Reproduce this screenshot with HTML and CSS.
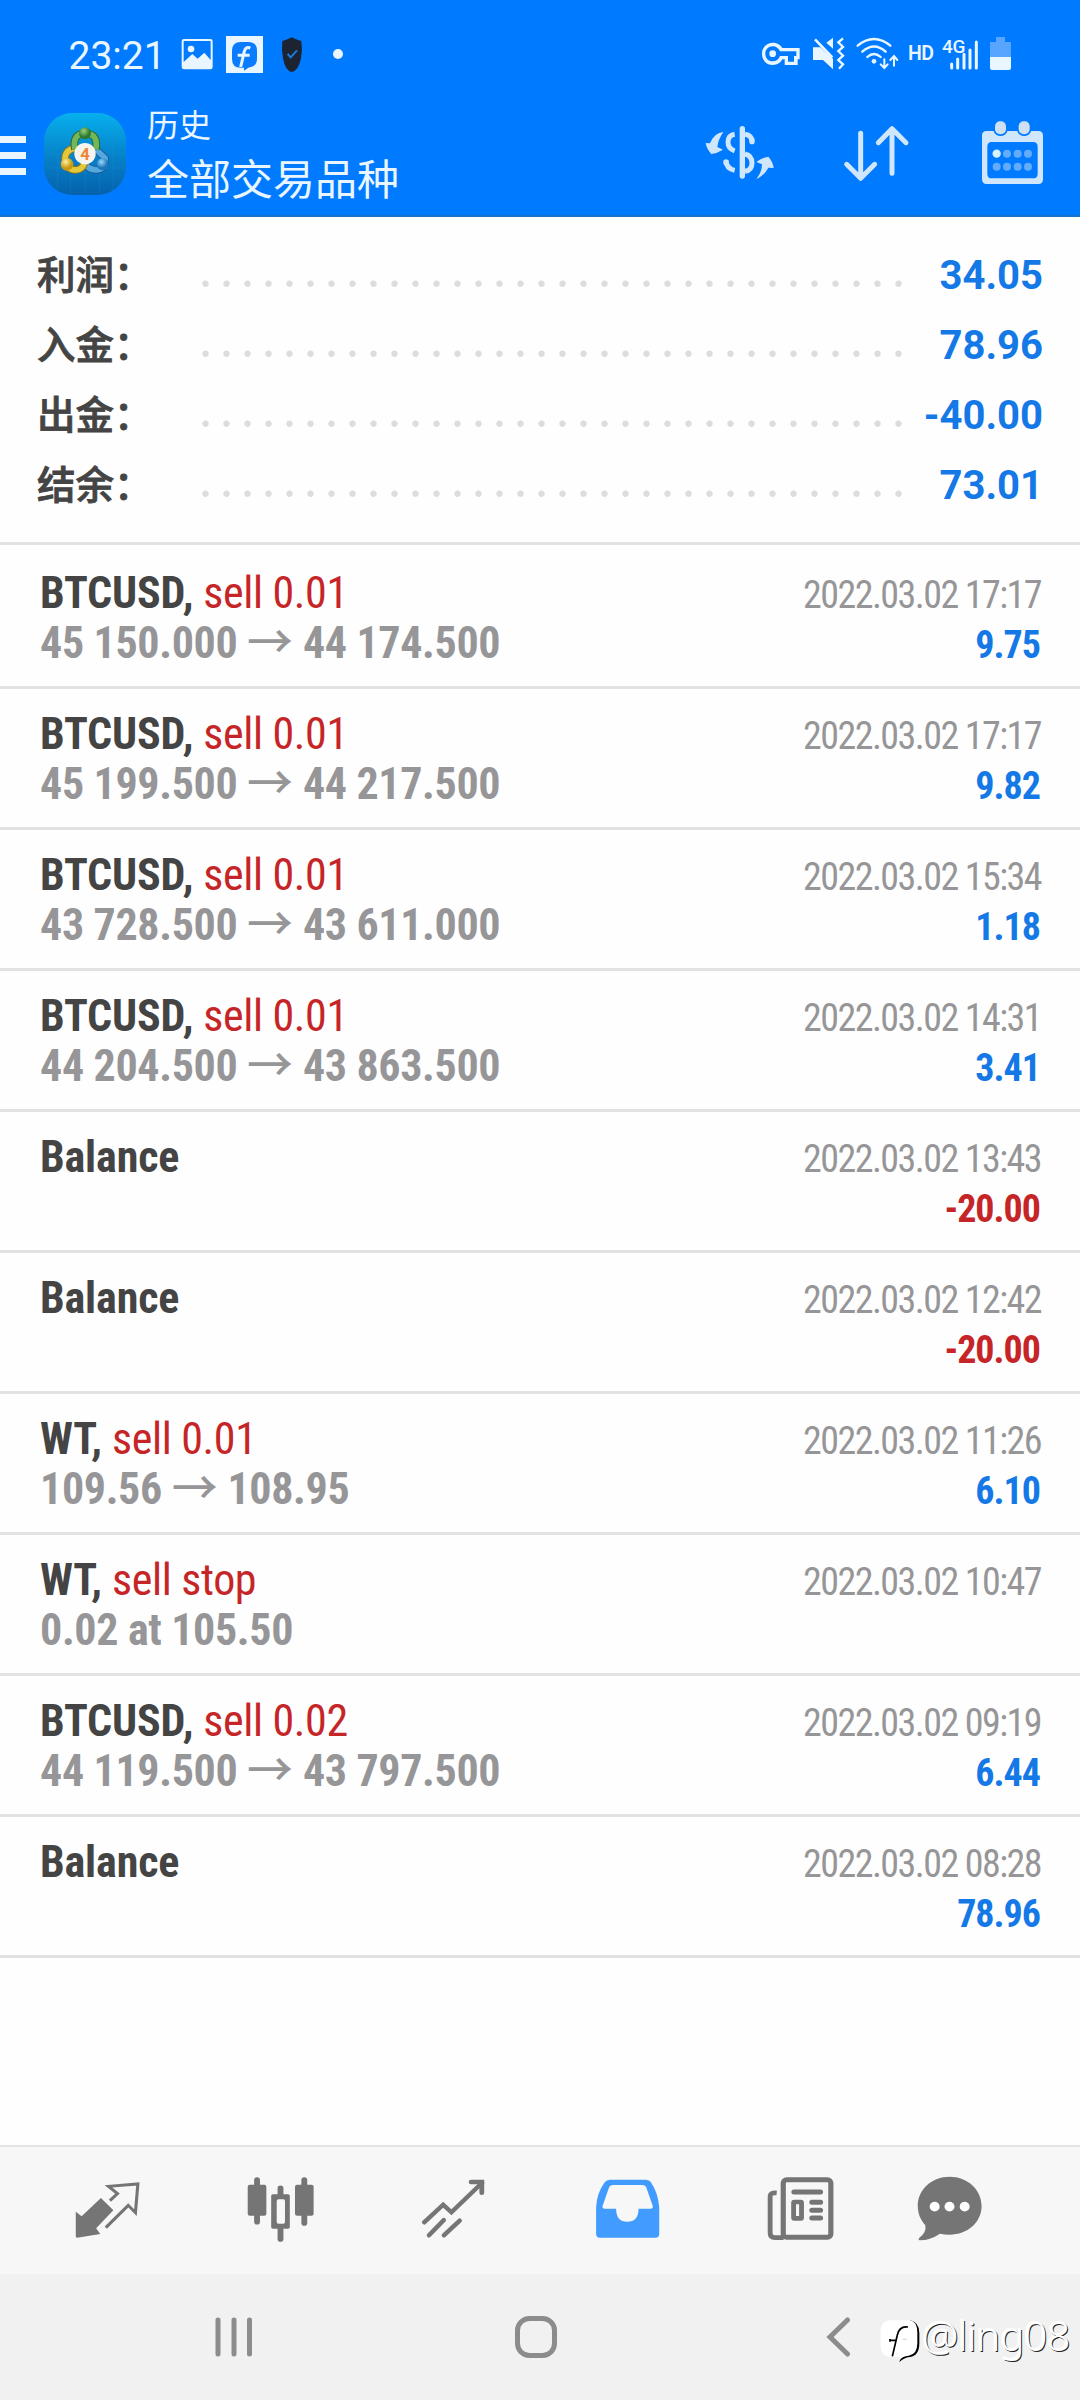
FILE: index.html
```html
<!DOCTYPE html>
<html lang="zh-CN">
<head>
<meta charset="utf-8">
<title>历史</title>
<link rel="stylesheet" href="styles.css">
</head>
<body>
<div class="screen">
  <header class="top">
    <div class="status">
      <span class="clock">23:21</span>
      <svg class="st-photo" width="32" height="40" viewBox="544 102 96 120">
        <path fill="#e9f6ff" fill-rule="evenodd" d="M553 117H632Q639 117 639 124V201Q639 208 632 208H553Q546 208 546 201V124Q546 117 553 117ZM552 123V186L578 162L594 176L614 158L633 180V123Z"/>
        <circle cx="574" cy="147" r="10" fill="#e9f6ff"/>
      </svg>
      <svg class="st-f" width="37" height="40" viewBox="678 102 111 120">
        <rect x="678" y="108" width="111" height="111" fill="#e9f6ff"/>
        <path fill="#0a7cff" d="M722 126H748Q771 128 771 152V176Q771 200 745 203L732 212V203H722Q696 203 696 176V152Q696 126 722 126Z"/>
        <path fill="none" stroke="#e9f6ff" stroke-width="9" d="M751 144Q737 138 733 154L722 201M713 166H749"/>
      </svg>
      <svg class="st-shield" width="22" height="40" viewBox="842 102 66 120">
        <path fill="#1b2430" d="M874 112Q882 117 903 123Q907 150 902 175Q894 213 874 216Q855 213 848 175Q843 150 846 123Q866 117 874 112Z"/>
        <path fill="none" stroke="#1d7be0" stroke-width="6" d="M862 162L871 172L890 151"/>
      </svg>
      <span class="st-dot"></span>
      <svg class="st-key" width="38" height="40" viewBox="247 102 114 120">
        <path fill="#e9f6ff" fill-rule="evenodd" d="M279 128C294 128 304 136 308 144H360V178H354V195H315V178H308C303 188 294 195 279 195C260 195 247 180 247 161C247 143 260 128 279 128ZM279 139C266 139 257 149 257 161C257 174 266 184 279 184C290 184 297 178 301 168H325V185H343V168H350V154H301C297 145 290 139 279 139Z"/>
        <circle cx="279" cy="161" r="10" fill="#e9f6ff"/>
      </svg>
      <svg class="st-mute" width="32" height="40" viewBox="400 102 96 120">
        <path fill="#e9f6ff" d="M400 142H422L460 176V208L430 180H400ZM440 128L460 113V146Z"/>
        <path fill="none" stroke="#e9f6ff" stroke-width="8" d="M406 118L458 172"/>
        <path fill="none" stroke="#e9f6ff" stroke-width="7" d="M490 115L476 127L490 141L476 153L490 167L476 180L490 193L478 206"/>
      </svg>
      <svg class="st-wifi" width="43" height="40" viewBox="529 102 129 120">
        <g fill="none" stroke="#e9f6ff" stroke-width="7" stroke-linecap="round">
          <path d="M534 137Q583 97 632 137"/><path d="M548 155Q583 124 618 155"/><path d="M563 171Q583 153 603 171"/>
          <path stroke-width="6" d="M614 178V203M603 193L614 204L624 193M643 197V170M632 180L643 168L653 180"/>
        </g>
        <circle cx="583" cy="184" r="7" fill="#e9f6ff"/>
      </svg>
      <span class="st-hd">HD</span>
      <svg class="st-cell" width="37" height="40" viewBox="785 102 111 120">
        <g stroke="#e9f6ff" stroke-width="9" stroke-linecap="round"><path d="M814 192V204M832 177V204M851 163V204M869 150V204M888 126V204"/></g>
        <text x="785" y="158" class="cell-text">4G</text>
      </svg>
      <svg class="st-batt" width="21" height="40" viewBox="930 102 63 120">
        <path fill="#57a5ff" d="M948 111H975V126H993V171H930V126H948Z"/>
        <path fill="#e9f6ff" d="M930 171H993V204Q993 210 987 210H936Q930 210 930 204Z"/>
      </svg>
    </div>
    <div class="appbar">
      <svg class="burger" width="26" height="40" viewBox="0 0 26 40"><path fill="#e9f6ff" d="M0 1H26V8H0ZM0 17H26V24H0ZM0 33H26V40H0Z"/></svg>
      <svg class="logo" width="82" height="82" viewBox="129 339 246 246">
        <defs>
          <linearGradient id="sky" x1="0" y1="0" x2="0" y2="1"><stop offset="0" stop-color="#07b0ee"/><stop offset=".5" stop-color="#0684cb"/><stop offset="1" stop-color="#0561ab"/></linearGradient>
          <radialGradient id="gr" cx=".4" cy=".3"><stop offset="0" stop-color="#9bd07e"/><stop offset="1" stop-color="#2c7a2f"/></radialGradient>
          <radialGradient id="ye" cx=".4" cy=".3"><stop offset="0" stop-color="#fff09a"/><stop offset="1" stop-color="#c79a12"/></radialGradient>
          <radialGradient id="bl" cx=".4" cy=".3"><stop offset="0" stop-color="#9ad8fa"/><stop offset="1" stop-color="#1b76bd"/></radialGradient>
        </defs>
        <rect x="129" y="339" width="246" height="246" rx="84" fill="url(#sky)"/>
        <path stroke="#2fa5dc" stroke-opacity=".25" stroke-width="2" d="M170 352V572M208 340V584M252 340V584M296 340V584M336 352V572M130 420H374M130 462H374M130 504H374"/>
        <g fill="none" stroke-width="23">
          <path d="M283 446L312 474Q316 508 286 510Q262 508 250 490" stroke="#1c5d96"/><path d="M283 446L312 474Q316 508 286 510Q262 508 250 490" stroke="#55a9df" stroke-width="17"/>
          <path d="M224 444Q192 448 192 478Q196 510 226 510Q244 508 250 490" stroke="#8d7419"/><path d="M224 444Q192 448 192 478Q196 510 226 510Q244 508 250 490" stroke="#e3c83b" stroke-width="17"/>
          <path d="M222 448Q212 402 253 400Q294 402 284 448" stroke="#2d6a2c"/><path d="M222 448Q212 402 253 400Q294 402 284 448" stroke="#73b75b" stroke-width="17"/>
        </g>
        <circle cx="252" cy="400" r="18" fill="url(#gr)"/><circle cx="198" cy="493" r="19" fill="url(#ye)"/><circle cx="305" cy="493" r="18" fill="url(#bl)"/>
        <circle cx="252" cy="461" r="32" fill="#f6f4ef"/>
        <text x="252" y="479" class="logo-num">4</text>
      </svg>
      <div class="titles"><div class="t1">历史</div><div class="t2">全部交易品种</div></div>
      <svg class="act-sym" width="74" height="95" viewBox="70 345 222 285">
        <g fill="none" stroke="#cfe6fb" stroke-width="16">
          <path d="M165 403Q145 406 145 427Q145 446 165 453M139 481Q140 506 165 511M196 403Q216 406 217 424M196 462Q217 467 217 489Q217 511 196 514" stroke-width="15"/>
          <path d="M217 420V425M139 486V488M188 386V528" stroke-linecap="round"/>
        </g>
        <path fill="#cfe6fb" d="M131 396Q104 398 91 430L78 429Q81 447 95 462Q112 460 130 449L113 441Q115 420 131 396ZM230 537Q254 527 266 503L282 504Q280 485 266 470Q248 472 230 486L247 493Q247 516 230 537Z"/>
      </svg>
      <svg class="act-sort" width="69" height="95" viewBox="485 345 207 285">
        <path fill="none" stroke="#cfe6fb" stroke-width="15" stroke-linecap="round" stroke-linejoin="round" d="M541 400V532M499 493L541 535L583 493M635 520V388M594 428L635 386L677 428"/>
      </svg>
      <svg class="act-cal" width="65" height="95" viewBox="900 345 195 285">
        <path fill="#cfe6fb" fill-rule="evenodd" d="M920 393H1075Q1089 393 1089 407V538Q1089 552 1075 552H920Q906 552 906 538V407Q906 393 920 393ZM935 426Q922 426 922 440V521Q922 535 935 535H1059Q1073 535 1073 521V440Q1073 426 1059 426Z"/>
        <rect x="945" y="364" width="33" height="39" rx="15" fill="#cfe0f2" stroke="#007aff" stroke-width="10" paint-order="stroke"/>
        <rect x="1016" y="364" width="33" height="39" rx="15" fill="#cfe0f2" stroke="#007aff" stroke-width="10" paint-order="stroke"/>
        <circle cx="950" cy="461" r="12.500" fill="#d8f0ff"/>
        <g fill="#62acfb"><circle cx="981" cy="461" r="12"/><circle cx="1013" cy="461" r="12"/><circle cx="1044" cy="461" r="12"/><circle cx="950" cy="500" r="12"/><circle cx="981" cy="500" r="12"/><circle cx="1013" cy="500" r="12"/><circle cx="1044" cy="500" r="12"/></g>
      </svg>
    </div>
  </header>

  <section class="summary">
    <div class="sum-row"><span class="label">利润：</span><i class="dots"></i><span class="sum">34.05</span></div>
    <div class="sum-row"><span class="label">入金：</span><i class="dots"></i><span class="sum">78.96</span></div>
    <div class="sum-row"><span class="label">出金：</span><i class="dots"></i><span class="sum">-40.00</span></div>
    <div class="sum-row"><span class="label">结余：</span><i class="dots"></i><span class="sum">73.01</span></div>
  </section>

  <main class="deals">
    <div class="deal"><div class="left"><div class="sym">BTCUSD, <span class="sell">sell 0.01</span></div><div class="price">45 150.000 <span class="arrow">→</span> 44 174.500</div></div><div class="right"><div class="date">2022.03.02 17:17</div><div class="val">9.75</div></div></div>
    <div class="deal"><div class="left"><div class="sym">BTCUSD, <span class="sell">sell 0.01</span></div><div class="price">45 199.500 <span class="arrow">→</span> 44 217.500</div></div><div class="right"><div class="date">2022.03.02 17:17</div><div class="val">9.82</div></div></div>
    <div class="deal"><div class="left"><div class="sym">BTCUSD, <span class="sell">sell 0.01</span></div><div class="price">43 728.500 <span class="arrow">→</span> 43 611.000</div></div><div class="right"><div class="date">2022.03.02 15:34</div><div class="val">1.18</div></div></div>
    <div class="deal"><div class="left"><div class="sym">BTCUSD, <span class="sell">sell 0.01</span></div><div class="price">44 204.500 <span class="arrow">→</span> 43 863.500</div></div><div class="right"><div class="date">2022.03.02 14:31</div><div class="val">3.41</div></div></div>
    <div class="deal"><div class="left"><div class="sym">Balance</div></div><div class="right"><div class="date">2022.03.02 13:43</div><div class="val neg">-20.00</div></div></div>
    <div class="deal"><div class="left"><div class="sym">Balance</div></div><div class="right"><div class="date">2022.03.02 12:42</div><div class="val neg">-20.00</div></div></div>
    <div class="deal"><div class="left"><div class="sym">WT, <span class="sell">sell 0.01</span></div><div class="price">109.56 <span class="arrow">→</span> 108.95</div></div><div class="right"><div class="date">2022.03.02 11:26</div><div class="val">6.10</div></div></div>
    <div class="deal"><div class="left"><div class="sym">WT, <span class="sell">sell stop</span></div><div class="price">0.02 at 105.50</div></div><div class="right"><div class="date">2022.03.02 10:47</div></div></div>
    <div class="deal"><div class="left"><div class="sym">BTCUSD, <span class="sell">sell 0.02</span></div><div class="price">44 119.500 <span class="arrow">→</span> 43 797.500</div></div><div class="right"><div class="date">2022.03.02 09:19</div><div class="val">6.44</div></div></div>
    <div class="deal"><div class="left"><div class="sym">Balance</div></div><div class="right"><div class="date">2022.03.02 08:28</div><div class="val">78.96</div></div></div>
  </main>

  <nav class="tabs">
    <svg viewBox="212 136 200 210" preserveAspectRatio="none">
      <path fill="#757575" d="M293 202L329 239L279 293L291 310L224 321Q220 321 220 317V243L237 257Z"/>
      <path fill="none" stroke="#757575" stroke-width="9" d="M319 210L341 189L315 167L400 160L393 246L372 224L307 291"/>
    </svg>
    <svg viewBox="713 136 200 210" preserveAspectRatio="none">
      <path stroke="#757575" stroke-width="17" stroke-linecap="round" d="M745 148V273M882 148V277M813 173V195M813 295V325"/>
      <rect x="718" y="162" width="54" height="93" rx="6" fill="#757575"/><rect x="855" y="162" width="54" height="93" rx="6" fill="#757575"/>
      <path fill="#757575" fill-rule="evenodd" d="M791 191H835Q840 191 840 196V289Q840 294 835 294H791Q786 294 786 289V196Q786 191 791 191ZM807 206Q802 206 802 211V274Q802 279 807 279H821Q826 279 826 274V211Q826 206 821 206Z"/>
    </svg>
    <svg viewBox="1217 136 200 210" preserveAspectRatio="none">
      <path fill="none" stroke="#757575" stroke-width="13" stroke-linecap="round" d="M1232 275L1287 222L1311 245L1400 156M1246 314L1289 268M1289 314L1335 270"/>
      <path fill="none" stroke="#757575" stroke-width="14" stroke-linecap="round" d="M1368 154H1399V186"/>
    </svg>
    <svg viewBox="153 136 200 210" preserveAspectRatio="none">
      <path fill="#429bff" fill-rule="evenodd" d="M202 147H307Q316 147 321 155Q342 188 345 230V310Q345 321 334 321H173Q162 321 162 310V230Q164 187 187 155Q192 147 202 147ZM211 163Q203 163 200 169L181 225Q179 234 187 234H220Q220 273 252 273Q285 273 285 234H320Q328 234 326 225L307 169Q304 163 296 163Z"/>
    </svg>
    <svg viewBox="660 136 200 210" preserveAspectRatio="none">
      <path fill="none" stroke="#757575" stroke-width="14" d="M691 187Q672 185 672 198V307Q672 321 686 321H711"/>
      <rect x="710" y="147" width="138" height="173" rx="10" fill="none" stroke="#757575" stroke-width="15"/>
      <path stroke="#757575" stroke-width="15" stroke-linecap="round" d="M741 184H818M793 215H818M793 239H818M793 262H818"/>
      <rect x="740" y="214" width="23" height="49" rx="2" fill="none" stroke="#757575" stroke-width="14"/>
    </svg>
    <svg class="chat" viewBox="1093 136 200 210" preserveAspectRatio="none">
      <path fill="#757575" d="M1193 138C1245 138 1286 176 1286 226C1286 275 1245 312 1193 312Q1178 312 1165 309Q1139 328 1106 329Q1101 327 1105 322Q1127 306 1123 284C1109 268 1101 248 1101 226C1101 176 1142 138 1193 138Z"/>
      <g fill="#fff"><circle cx="1150" cy="228" r="14.500"/><circle cx="1193" cy="228" r="14.500"/><circle cx="1237" cy="228" r="14.500"/></g>
    </svg>
  </nav>

  <footer class="sysnav">
    <svg class="recents" width="38" height="42" viewBox="0 0 38 42"><path stroke="#8c8c8c" stroke-width="5" stroke-linecap="round" d="M3 4V38M19 4V38M34.500 4V38"/></svg>
    <svg class="home" width="42" height="42" viewBox="0 0 42 42"><rect x="2.500" y="2.500" width="37" height="37" rx="12" fill="none" stroke="#8c8c8c" stroke-width="5"/></svg>
    <svg class="back" width="25" height="42" viewBox="0 0 25 42"><path fill="none" stroke="#8c8c8c" stroke-width="5" stroke-linecap="round" d="M21.500 4L4 21L21.500 38"/></svg>
  </footer>

  <div class="mark">
    <svg width="42" height="44" viewBox="60 88 126 132">
      <path fill="#000" d="M150 92Q178 98 178 130V160Q178 198 150 202Q130 204 118 218Q122 200 140 196Z"/>
      <path fill="#fff" d="M88 92H150Q172 95 172 130V160Q172 194 146 198Q128 200 118 210L122 202H90Q62 200 62 170V122Q64 94 88 92Z"/>
      <path fill="none" stroke="#000" stroke-width="5" d="M144 112Q118 108 112 136L97 200M88 152H108M90 148V156"/>
      <path fill="none" stroke="#bbb" stroke-width="2" d="M128 149H140"/>
    </svg>
    <span>@ling08</span>
  </div>
</div>
</body>
</html>
```
FILE: styles.css
```css
* { box-sizing: border-box; }
body { margin: 0; background: #fff; font-family: Roboto, "Noto Sans CJK SC", sans-serif; }
svg { display: block; flex: none; }
.screen { position: relative; width: 1080px; height: 2400px; display: flex; flex-direction: column; overflow: hidden; background: #fefefe; }

/* header */
.top { height: 217px; background: #007aff; border-bottom: 2px solid #1b70c8; color: #e9f6ff; }
.status { height: 108px; display: flex; align-items: center; padding-left: 68.500px; }
.clock { font-size: 39px; line-height: 40px; padding-top: 3px; width: 112.500px; }
.st-f { margin-left: 13px; }
.st-shield { margin-left: 17.500px; }
.st-dot { width: 10px; height: 10px; border-radius: 50%; background: #e9f6ff; margin-left: 30px; }
.st-key { margin-left: auto; }
.st-mute { margin-left: 13px; }
.st-wifi { margin-left: 11px; }
.st-hd { margin-left: 9px; width: 26px; font-size: 19.500px; font-weight: 600; line-height: 24px; letter-spacing: -.5px; }
.st-cell { margin-left: 7.500px; }
.cell-text { font: 500 57px Roboto, sans-serif; fill: #e9f6ff; letter-spacing: -1px; }
.st-batt { margin: 0 69px 0 11.500px; }
.appbar { height: 107px; display: flex; align-items: flex-start; padding-right: 35px; }
.burger { margin-top: 27px; }
.logo { margin: 5px 21px 0 18px; }
.logo-num { font: 700 50px Roboto, sans-serif; fill: #ee8434; text-anchor: middle; }
.titles { padding-top: 3px; }
.t1 { font-size: 32px; line-height: 30px; }
.t2 { font-size: 42px; line-height: 50px; margin-top: 14.500px; }
.act-sym, .act-sort, .act-cal { margin-top: 7px; }
.act-sym { margin-left: auto; }
.act-sort { margin-left: 64.500px; }
.act-cal { margin-left: 69.500px; }

/* totals */
.summary { padding: 23px 38px 22px 37px; border-bottom: 3px solid #e2e2e2; }
.sum-row { display: flex; align-items: baseline; height: 70px; line-height: 72px; }
.label { width: 158px; font-size: 38.500px; font-weight: 500; color: #444; -webkit-text-stroke: .8px #444; }
.dots { width: 714px; height: 70px; align-self: flex-start; background: radial-gradient(circle at 10.500px 43.700px, #ddd 2.800px, rgba(221,221,221,0) 3.600px) 0 0 / 21px 70px repeat-x; }
.sum { margin-left: auto; font-size: 40px; font-weight: 700; color: #1479e6; margin-right: -1px; }

/* deal history */
.deals { padding-top: 3px; font-family: "Roboto Condensed", "Noto Sans CJK SC", sans-serif; }
.deal { display: flex; justify-content: space-between; height: 141px; padding: 20px 40px 0 40px; border-bottom: 3px solid #e2e2e2; line-height: 50px; white-space: nowrap; }
.sym { font-size: 44px; font-weight: 700; color: #444; letter-spacing: -.150px; }
.sell { font-weight: 400; color: #c62528; letter-spacing: -.350px; }
.price { font-size: 44px; font-weight: 700; color: #969698; letter-spacing: -.350px; }
.arrow { font-weight: 500; font-size: 46px; line-height: 0; letter-spacing: 0; }
.right { padding-top: 2.400px; font-size: 38px; text-align: right; }
.date { color: #969698; letter-spacing: -1.550px; margin-right: -1px; }
.val { font-weight: 700; color: #1479e6; letter-spacing: -1px; }
.neg { color: #c62528; }

/* bottom bars */
.tabs { margin-top: auto; height: 129px; flex: none; display: flex; align-items: center; gap: 104.400px; padding-left: 72.500px; background: #f7f7f7; border-top: 2px solid #e2e2e2; }
.tabs svg { width: 69px; height: 70px; }
.tabs .chat { margin-left: -24.600px; }
.sysnav { height: 126px; flex: none; display: flex; align-items: center; background: #f1f1f1; }
.recents { margin-left: 215px; }
.home { margin-left: 262px; }
.back { margin-left: 269px; }
.mark { position: absolute; left: 880px; top: 2319px; display: flex; align-items: flex-start; }
.mark span { font: 300 41px/44px "Noto Sans", sans-serif; margin: -6px 0 0 0; letter-spacing: -.5px; color: #fff; text-shadow: 1px 1px 0 #222, -1px -1px 0 #fff; }
```
